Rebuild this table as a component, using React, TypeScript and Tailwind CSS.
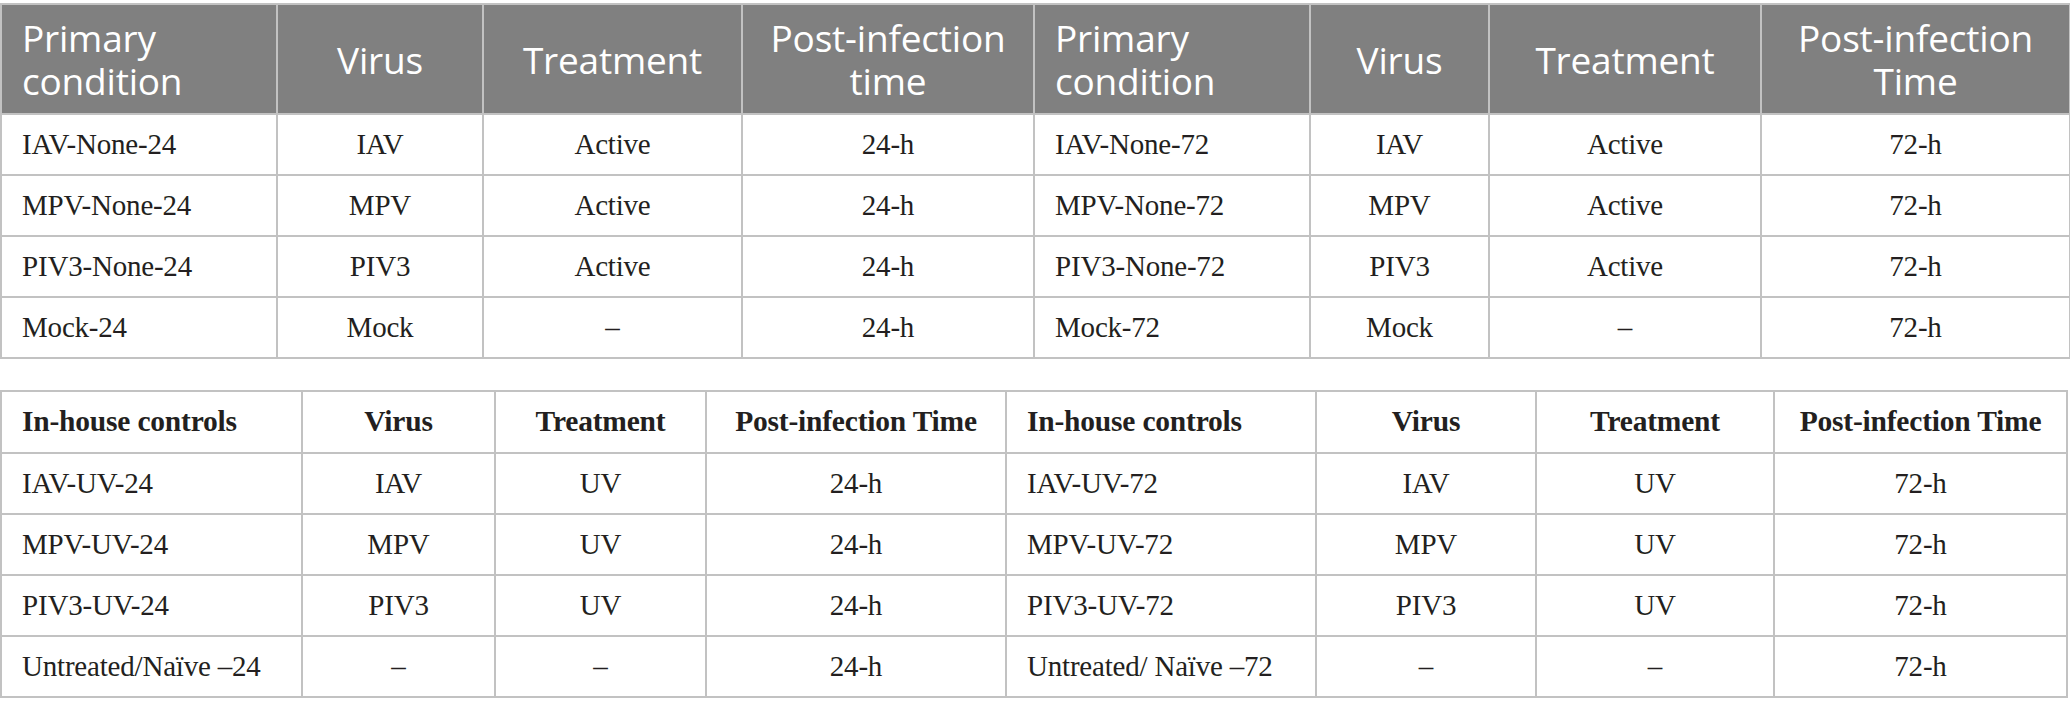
const primaryCols = [276, 206, 259, 292, 276, 179, 272, 309];
const controlCols = [301, 193, 211, 300, 310, 220, 238, 293];

const primaryRows = [
  ['IAV-None-24', 'IAV', 'Active', '24-h', 'IAV-None-72', 'IAV', 'Active', '72-h'],
  ['MPV-None-24', 'MPV', 'Active', '24-h', 'MPV-None-72', 'MPV', 'Active', '72-h'],
  ['PIV3-None-24', 'PIV3', 'Active', '24-h', 'PIV3-None-72', 'PIV3', 'Active', '72-h'],
  ['Mock-24', 'Mock', '–', '24-h', 'Mock-72', 'Mock', '–', '72-h'],
];

const controlRows = [
  ['IAV-UV-24', 'IAV', 'UV', '24-h', 'IAV-UV-72', 'IAV', 'UV', '72-h'],
  ['MPV-UV-24', 'MPV', 'UV', '24-h', 'MPV-UV-72', 'MPV', 'UV', '72-h'],
  ['PIV3-UV-24', 'PIV3', 'UV', '24-h', 'PIV3-UV-72', 'PIV3', 'UV', '72-h'],
  ['Untreated/Naïve –24', '–', '–', '24-h', 'Untreated/ Naïve –72', '–', '–', '72-h'],
];

// first column of each half is left aligned, the rest centred
const isLabel = (i: number) => i === 0 || i === 4;

const cellBorder = 'border-2 border-[#c2c2c2]';
const serif = "font-['Liberation_Serif','Times_New_Roman',serif]";

function BodyRow({ cells }: { cells: string[] }) {
  return (
    <tr className="h-[61px]">
      {cells.map((value, i) => (
        <td
          key={i}
          className={`${cellBorder} ${serif} text-[29px] leading-none tracking-[-0.2px] text-[#231f20] ${
            isLabel(i) ? 'pl-[20px] text-left' : 'text-center'
          }`}
        >
          {value}
        </td>
      ))}
    </tr>
  );
}

function PrimaryTable() {
  const headers: [string, string | null][] = [
    ['Primary', 'condition'],
    ['Virus', null],
    ['Treatment', null],
    ['Post-infection', 'time'],
    ['Primary', 'condition'],
    ['Virus', null],
    ['Treatment', null],
    ['Post-infection', 'Time'],
  ];

  return (
    <table className="w-[2069px] table-fixed border-collapse">
      <colgroup>
        {primaryCols.map((w, i) => (
          <col key={i} style={{ width: w }} />
        ))}
      </colgroup>
      <thead>
        <tr className="h-[110px] bg-[#808080]">
          {headers.map(([first, second], i) => (
            <th
              key={i}
              className={`${cellBorder} font-['Open_Sans','Noto_Sans',sans-serif] text-[37px] leading-[43px] font-medium tracking-[-0.2px] text-white ${
                isLabel(i) ? 'pl-[20px] text-left' : 'text-center'
              }`}
            >
              {first}
              {second && (
                <>
                  <br />
                  {second}
                </>
              )}
            </th>
          ))}
        </tr>
      </thead>
      <tbody>
        {primaryRows.map((row, i) => (
          <BodyRow key={i} cells={row} />
        ))}
      </tbody>
    </table>
  );
}

function ControlsTable() {
  const headers = [
    'In-house controls',
    'Virus',
    'Treatment',
    'Post-infection Time',
    'In-house controls',
    'Virus',
    'Treatment',
    'Post-infection Time',
  ];

  return (
    <table className="w-[2066px] table-fixed border-collapse">
      <colgroup>
        {controlCols.map((w, i) => (
          <col key={i} style={{ width: w }} />
        ))}
      </colgroup>
      <thead>
        <tr className="h-[62px]">
          {headers.map((label, i) => (
            <th
              key={i}
              className={`${cellBorder} ${serif} text-[29.5px] leading-none font-bold tracking-[-0.2px] text-[#231f20] ${
                isLabel(i) ? 'pl-[20px] text-left' : 'text-center'
              }`}
            >
              {label}
            </th>
          ))}
        </tr>
      </thead>
      <tbody>
        {controlRows.map((row, i) => (
          <BodyRow key={i} cells={row} />
        ))}
      </tbody>
    </table>
  );
}

export default function App() {
  return (
    <div className="h-[716px] w-[2070px] overflow-hidden bg-white pt-[3px]">
      <PrimaryTable />
      <div className="h-[31px]" />
      <ControlsTable />
    </div>
  );
}
